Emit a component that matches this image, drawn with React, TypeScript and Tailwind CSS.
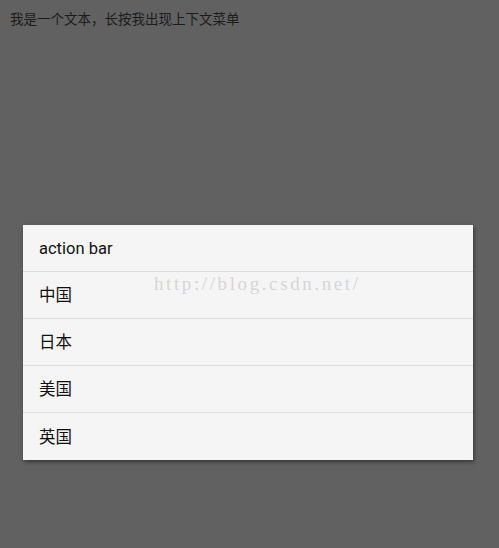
export default function App() {
  const items = ['action bar', '中国', '日本', '美国', '英国'];

  return (
    <div className="h-[548px] w-[499px] bg-[#616161] overflow-hidden" style={{ fontFamily: 'Roboto, "Noto Sans CJK SC", sans-serif' }}>
      <p className="pl-[10px] pt-[10px] text-[13.5px] leading-[18px] text-[#1c1c1c]">
        我是一个文本，长按我出现上下文菜单
      </p>

      <div className="relative ml-[23px] mt-[197px] w-[450px] bg-[#f5f5f5] shadow-[1px_2px_4px_rgba(0,0,0,0.45)]">
        {items.map((label, i) => (
          <div
            key={label}
            className={`flex h-[47px] items-center pl-[16px] pt-[3px] text-[16.5px] text-[#111111] ${i < items.length - 1 ? 'border-b border-[#dcdcdc]' : 'h-[46px]'}`}
          >
            {label}
          </div>
        ))}

        {/* watermark */}
        <span
          className="pointer-events-none absolute left-[131px] top-[49px] text-[19px] leading-[20px] tracking-[2.6px] text-[#d6d6d6]"
          style={{ fontFamily: '"Liberation Serif", "DejaVu Serif", serif' }}
        >
          http://blog.csdn.net/
        </span>
      </div>
    </div>
  );
}
